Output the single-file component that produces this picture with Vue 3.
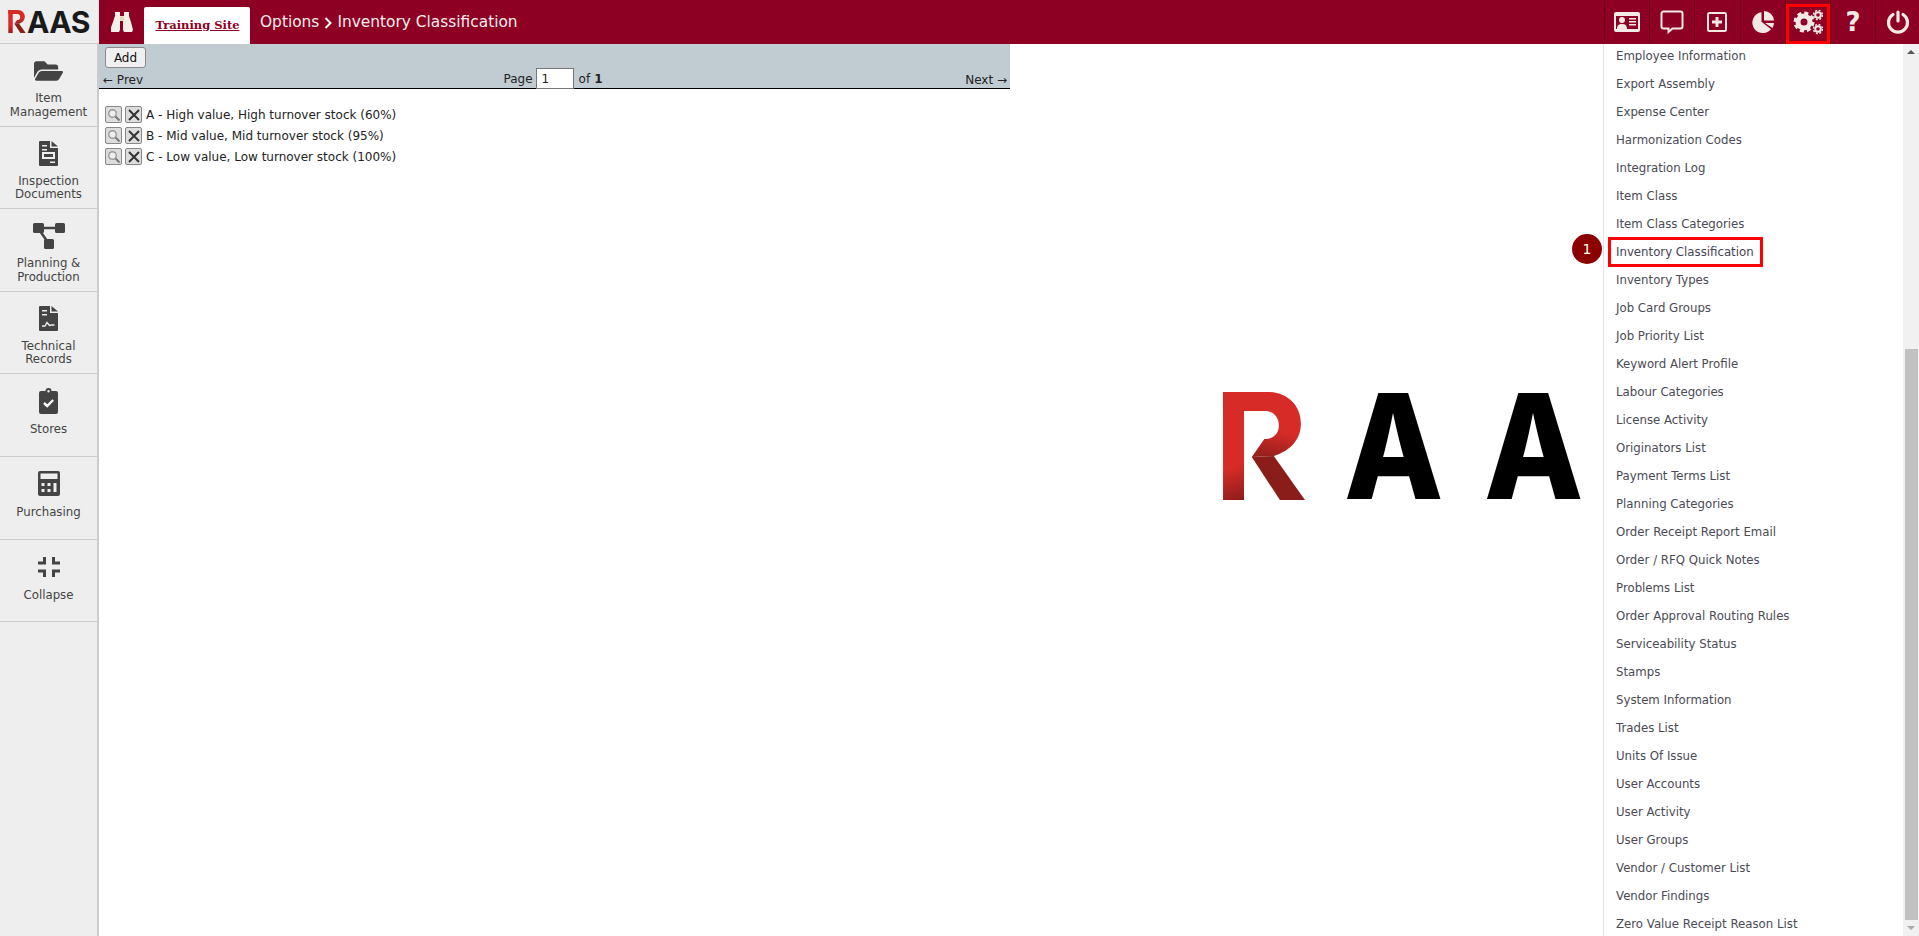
<script setup>
const menu = ['Employee Information','Export Assembly','Expense Center','Harmonization Codes','Integration Log','Item Class','Item Class Categories','Inventory Classification','Inventory Types','Job Card Groups','Job Priority List','Keyword Alert Profile','Labour Categories','License Activity','Originators List','Payment Terms List','Planning Categories','Order Receipt Report Email','Order / RFQ Quick Notes','Problems List','Order Approval Routing Rules','Serviceability Status','Stamps','System Information','Trades List','Units Of Issue','User Accounts','User Activity','User Groups','Vendor / Customer List','Vendor Findings','Zero Value Receipt Reason List']
const rows = ['A - High value, High turnover stock (60%)','B - Mid value, Mid turnover stock (95%)','C - Low value, Low turnover stock (100%)']
</script>

<template>
  <div class="page">
    <header class="topbar">
      <div class="brand">
        <svg class="brand-r" viewBox="100 66 242 319"><use href="#rmark" /></svg>
        <span class="brand-text">AAS</span>
      </div>
      <div class="binoc">
        <svg width="22" height="20" viewBox="0 0 22 20"><path fill="#f4efe9" d="M4 0h5v4h4V0h5v4l2 6 2 8-1 2h-8l-1-2V9H9v9l-1 2H0l-1-2 3-8 2-6z" /><path fill="#d8b98a" d="M9.500 4.500h1v4h-1zM11.500 4.500h1v4h-1z" /></svg>
      </div>
      <a class="tab">Training Site</a>
      <div class="title">Options<svg class="chev" width="8" height="12" viewBox="0 0 8 12"><path d="M1.500 1l5 5-5 5" fill="none" stroke="#fff" stroke-width="2" /></svg>Inventory Classification</div>
      <div class="spacer"></div>
      <div class="tool">
        <svg width="26" height="20" viewBox="0 0 26 20"><rect width="26" height="20" rx="2" fill="#f3e9e6" /><rect x="2" y="4" width="22" height="13" fill="#8e0023" /><circle cx="8" cy="8" r="3" fill="#f3e9e6" /><path fill="#f3e9e6" d="M3 17c0-4 2-5 5-5s5 1 5 5zM15 6h7v1.500h-7zM15 9h7v1.500h-7zM15 12h7v1.500h-7z" /></svg>
      </div>
      <div class="tool">
        <svg width="24" height="24" viewBox="0 0 24 24"><path d="M3.500 1.500h17a2 2 0 0 1 2 2v13a2 2 0 0 1-2 2h-8l-4 3.500v-3.500h-5a2 2 0 0 1-2-2v-13a2 2 0 0 1 2-2z" fill="none" stroke="#f3e9e6" stroke-width="2" /></svg>
      </div>
      <div class="tool">
        <svg width="20" height="20" viewBox="0 0 20 20"><rect x="1" y="1" width="18" height="18" rx="1.500" fill="none" stroke="#f3e9e6" stroke-width="2" /><path d="M5 10h10M10 5v10" stroke="#f3e9e6" stroke-width="3" /></svg>
      </div>
      <div class="tool">
        <svg width="24" height="24" viewBox="0 0 24 24"><path fill="#f3e9e6" d="M10.500 2.200a10.500 10.500 0 1 0 9.500 17l-9.500-7.500z" /><path fill="#f3e9e6" d="M13 1a10 10 0 0 1 10 9.500H13z" /><path fill="#f3e9e6" d="M14 13h9a10 10 0 0 1-1.600 5z" /></svg>
      </div>
      <div class="tool gear-tool">
        <svg width="30" height="26" viewBox="0 0 30 26">
          <g fill="none" stroke="#f3e9e6">
            <circle cx="11" cy="13" r="6" stroke-width="5" />
            <circle cx="11" cy="13" r="9" stroke-width="3" stroke-dasharray="4.070 3" />
            <circle cx="25" cy="6" r="2.800" stroke-width="2" />
            <circle cx="25" cy="6" r="4.500" stroke-width="1.500" stroke-dasharray="2 1.540" />
            <circle cx="25" cy="20" r="2.800" stroke-width="2" />
            <circle cx="25" cy="20" r="4.500" stroke-width="1.500" stroke-dasharray="2 1.540" />
          </g>
        </svg>
      </div>
      <div class="tool help">?</div>
      <div class="tool">
        <svg width="24" height="24" viewBox="0 0 24 24" fill="none" stroke="#f3e9e6" stroke-width="3.200" stroke-linecap="round"><path d="M7 4.500a9.500 9.500 0 1 0 10 0" /><path d="M12 2v9" /></svg>
      </div>
    </header>

    <div class="body">
      <nav class="sidebar">
        <div class="nav-item">
          <div class="nav-icon"><svg width="29" height="26" viewBox="0 0 576 512"><path fill="#444" d="M572.694 292.093L500.27 416.248A63.997 63.997 0 0 1 444.989 448H45.025c-18.523 0-30.064-20.093-20.731-36.093l72.424-124.155A64 64 0 0 1 152 256h399.964c18.523 0 30.064 20.093 20.73 36.093zM152 224h328v-48c0-26.51-21.49-48-48-48H272l-64-64H48C21.49 64 0 85.49 0 112v278.046l69.077-118.418C86.214 242.25 117.989 224 152 224z" /></svg></div>
          <div class="nav-label">Item<br />Management</div>
        </div>
        <div class="nav-item">
          <div class="nav-icon"><svg width="19" height="25" viewBox="0 0 19 25"><path fill="#444" fill-rule="evenodd" d="M1 0h10v7h8v17a1 1 0 0 1-1 1H1a1 1 0 0 1-1-1V1a1 1 0 0 1 1-1zM3 4v1.500h5V4zM3 8v1.500h5V8zM3 11v7h13v-7zM5 13h9v3H5zM11 20.500V22h5v-1.500z" /><path fill="#444" d="M12.500 0L19 5.500h-6.500z" /></svg></div>
          <div class="nav-label">Inspection<br />Documents</div>
        </div>
        <div class="nav-item">
          <div class="nav-icon"><svg width="32" height="26" viewBox="0 0 32 26"><path d="M8 5h16M7 8l7 10" stroke="#444" stroke-width="2.500" /><rect x="0" y="0" width="11" height="10" rx="1.500" fill="#444" /><rect x="22" y="0" width="10" height="10" rx="1.500" fill="#444" /><rect x="11" y="16" width="10" height="10" rx="1.500" fill="#444" /></svg></div>
          <div class="nav-label">Planning &amp;<br />Production</div>
        </div>
        <div class="nav-item">
          <div class="nav-icon"><svg width="19" height="25" viewBox="0 0 19 25"><path fill="#444" fill-rule="evenodd" d="M1 0h10v7h8v17a1 1 0 0 1-1 1H1a1 1 0 0 1-1-1V1a1 1 0 0 1 1-1zM3 4v1.500h5V4zM3 8v1.500h5V8z" /><path fill="#444" d="M12.500 0L19 5.500h-6.500z" /><path d="M3 20h3l2-3.500 2.500 3 2-.5h3" fill="none" stroke="#eee" stroke-width="1.400" /></svg></div>
          <div class="nav-label">Technical<br />Records</div>
        </div>
        <div class="nav-item">
          <div class="nav-icon"><svg width="19" height="26" viewBox="0 0 19 26"><path fill="#444" fill-rule="evenodd" d="M2 3h4.500a3 3 0 0 1 6 0H17a2 2 0 0 1 2 2v19a2 2 0 0 1-2 2H2a2 2 0 0 1-2-2V5a2 2 0 0 1 2-2zM9.500 2a1.200 1.200 0 1 0 0 2.400 1.200 1.200 0 0 0 0-2.400z" /><path d="M5 15l3.200 3 6-6" fill="none" stroke="#fff" stroke-width="2.400" /></svg></div>
          <div class="nav-label single">Stores</div>
        </div>
        <div class="nav-item">
          <div class="nav-icon"><svg width="22" height="25" viewBox="0 0 22 25"><path fill="#444" fill-rule="evenodd" d="M2 0h18a2 2 0 0 1 2 2v21a2 2 0 0 1-2 2H2a2 2 0 0 1-2-2V2a2 2 0 0 1 2-2zM2.500 2.500V8h17V2.500zM3.500 12v3h3v-3zM9.500 12v3h3v-3zM15.500 12v9h3v-9zM3.500 18v3h3v-3zM9.500 18v3h3v-3z" /></svg></div>
          <div class="nav-label single">Purchasing</div>
        </div>
        <div class="nav-item">
          <div class="nav-icon"><svg width="22" height="20" viewBox="0 0 22 20"><path fill="#444" d="M5 0h3v7.500H0v-3h5zM14 0h3v4.500h5v3h-8zM0 12.500h8V20H5v-4.500H0zM14 12.500h8v3h-5V20h-3z" /></svg></div>
          <div class="nav-label single">Collapse</div>
        </div>
      </nav>

      <main class="main">
        <section class="panel">
          <div class="toolbar">
            <button class="add">Add</button>
            <div class="pager">
              <span class="pg-side">← Prev</span>
              <span class="pg-mid"><span>Page</span><input class="pg-input" value="1" /><span>of</span><b>1</b></span>
              <span class="pg-side pg-right">Next →</span>
            </div>
          </div>
          <div class="rows">
            <div v-for="r in rows" :key="r" class="row">
              <span class="ico"><svg width="14" height="14" viewBox="0 0 14 14"><circle cx="5.500" cy="5.500" r="3.800" fill="#eee" stroke="#999" stroke-width="1.400" /><path d="M8.500 8.500l4 4" stroke="#777" stroke-width="2" /></svg></span>
              <span class="ico"><svg width="14" height="14" viewBox="0 0 14 14"><path d="M2 2l10 10M12 2L2 12" stroke="#333" stroke-width="2" /></svg></span>
              <span class="row-text">{{ r }}</span>
            </div>
          </div>
        </section>
        <div class="watermark">
          <svg class="wm-r" viewBox="100 66 242 319"><use href="#rmark" /></svg>
          <span class="wm-a">A</span><span class="wm-a">A</span>
        </div>
      </main>
    </div>

    <aside class="dropdown">
      <span class="badge">1</span>
      <ul class="list">
        <li v-for="m in menu" :key="m"><span :class="{ boxed: m === 'Inventory Classification' }">{{ m }}</span></li>
      </ul>
      <div class="scroll">
        <span class="arrow up"></span>
        <span class="thumb-gap"></span>
        <span class="thumb"></span>
        <span class="arrow down"></span>
      </div>
    </aside>

    <svg class="defs" width="0" height="0">
      <defs>
        <linearGradient id="rstem" gradientUnits="userSpaceOnUse" x1="130" y1="290" x2="165" y2="385"><stop offset="0" stop-color="#d62b27" /><stop offset="1" stop-color="#8c1c1a" /></linearGradient>
        <linearGradient id="rbowl" gradientUnits="userSpaceOnUse" x1="260" y1="180" x2="240" y2="258"><stop offset="0" stop-color="#d62b27" /><stop offset="1" stop-color="#97201d" /></linearGradient>
        <g id="rmark">
          <path fill="url(#rstem)" d="M100 66h62v319h-62z" />
          <path fill="url(#rbowl)" d="M100 66H230C290 66 330 105 330 160C330 205 300 240 250 255L185 258L222 205C250 205 265 188 265 165C265 140 248 122 225 122H100Z" />
          <path fill="#8a1c1a" d="M185 258L250 255L342 385H268Z" />
        </g>
      </defs>
    </svg>
  </div>
</template>

<style scoped>
.page { position: relative; width: 1919px; height: 936px; overflow: hidden; background: #fff; font-family: "DejaVu Sans", sans-serif; font-size: 11.750px; color: #222; }
.defs { position: absolute; }
.topbar { display: flex; height: 44px; background: #8e0023; }
.brand { width: 99px; height: 44px; box-sizing: border-box; background: #eee; border-bottom: 1px solid #ccc; display: flex; align-items: center; padding-left: 8px; gap: 1px; }
.brand-r { width: 18px; height: 23px; }
.brand-text { font-family: "Inter", sans-serif; font-weight: 700; font-size: 30px; line-height: 1; color: #1a1a1a; letter-spacing: -0.500px; }
.binoc { width: 45px; display: flex; align-items: center; justify-content: center; }
.tab { width: 106px; margin-top: 7px; padding: 0 0 2px 1px; box-sizing: border-box; background: #fff; border-radius: 2px 2px 0 0; color: #8e0023; font-family: "DejaVu Serif", serif; font-weight: 700; font-size: 11.500px; text-decoration: underline; display: flex; align-items: center; justify-content: center; }
.title { margin-left: 10px; color: #f7eeee; font-size: 15.400px; display: flex; align-items: center; gap: 5px; white-space: nowrap; }
.chev { margin-top: 1px; }
.spacer { flex: 1; }
.tool { width: 45.170px; box-sizing: border-box; border-left: 1px solid #6e0019; display: flex; align-items: center; justify-content: center; position: relative; }
.tool:last-child { width: 44px; }
.gear-tool::after { content: ""; position: absolute; left: 0; right: 0; top: 4px; bottom: 0; border: 3px solid #f00; }
.help { color: #f3e9e6; font-weight: 700; font-size: 26px; }
.body { display: flex; height: 892px; }
.sidebar { width: 99px; flex: none; box-sizing: border-box; background: #eee; border-right: 2px solid #ccc; }
.nav-item { height: 82.600px; box-sizing: border-box; border-bottom: 1px solid #ccc; padding-top: 12px; text-align: center; color: #444; }
.nav-icon { height: 30px; display: flex; align-items: center; justify-content: center; }
.nav-label { margin-top: 6px; line-height: 13.500px; }
.nav-label.single { margin-top: 7px; }
.main { flex: 1; display: flex; align-items: flex-start; min-width: 0; }
.panel { width: 911px; flex: none; }
.toolbar { height: 45px; box-sizing: border-box; background: #c1ccd2; border-bottom: 1px solid #000; padding: 3px 2px 0 4px; display: flex; flex-direction: column; }
.add { width: 41px; height: 21px; padding: 0; box-sizing: border-box; margin-left: 2px; background: #f0f0f0; border: 1px solid #8a8a8a; border-radius: 3px; font: inherit; font-size: 12px; color: #111; flex: none; }
.pager { display: grid; grid-template-columns: 1fr auto 1fr; align-items: end; flex: 1; font-size: 12px; color: #222; }
.pg-side { padding-bottom: 2px; }
.pg-mid { display: flex; align-items: center; gap: 4px; padding-bottom: 0; margin-left: -5px; }
.pg-right { text-align: right; padding-right: 1px; }
.pg-input { width: 38px; height: 21px; box-sizing: border-box; border: 1px solid #777; padding: 0 5px; font: inherit; margin: 0 1px 0 -1px; color: #222; }
.rows { padding: 15px 0 0 6px; font-size: 12px; }
.row { display: flex; align-items: center; height: 21px; gap: 3px; }
.ico { width: 17px; height: 17px; box-sizing: border-box; border: 1px solid #888; border-radius: 2px; background: #ddd; display: flex; align-items: center; justify-content: center; }
.row-text { margin-left: 1px; }
.watermark { margin: 348px 0 0 213px; display: flex; align-items: center; height: 108px; flex: none; }
.wm-r { width: 82px; height: 108px; margin-right: 39px; }
.wm-a { width: 140px; font-family: "Inter", sans-serif; font-weight: 800; font-size: 146px; line-height: 108px; color: #000; transform: scaleX(0.885); transform-origin: left center; }
.dropdown { position: absolute; top: 44px; right: 0; width: 316px; height: 892px; box-sizing: border-box; background: #fff; border-left: 1px solid #e4e4e4; display: flex; }
.badge { position: absolute; left: -32px; top: 190px; width: 30px; height: 30px; border-radius: 50%; background: #8b0000; color: #fff; font-size: 14px; display: flex; align-items: center; justify-content: center; }
.list { flex: 1; list-style: none; margin: -2px 0 0; padding: 0 0 0 12px; overflow: hidden; color: #4a4a55; }
.list li { height: 28px; display: flex; align-items: center; }
.boxed { margin-left: -5px; padding: 0 6px 0 5px; line-height: 24px; outline: 3px solid #f00; color: #445; }
.scroll { width: 16px; flex: none; background: #f1f1f1; display: flex; flex-direction: column; align-items: center; }
.arrow { width: 0; height: 0; border-left: 4px solid transparent; border-right: 4px solid transparent; margin: 6px 0; }
.up { border-bottom: 4px solid #555; }
.down { border-top: 4px solid #aaa; margin-top: 6px; }
.thumb-gap { height: 289px; }
.thumb { width: 13px; flex: 1; background: #c1c1c1; }
</style>
